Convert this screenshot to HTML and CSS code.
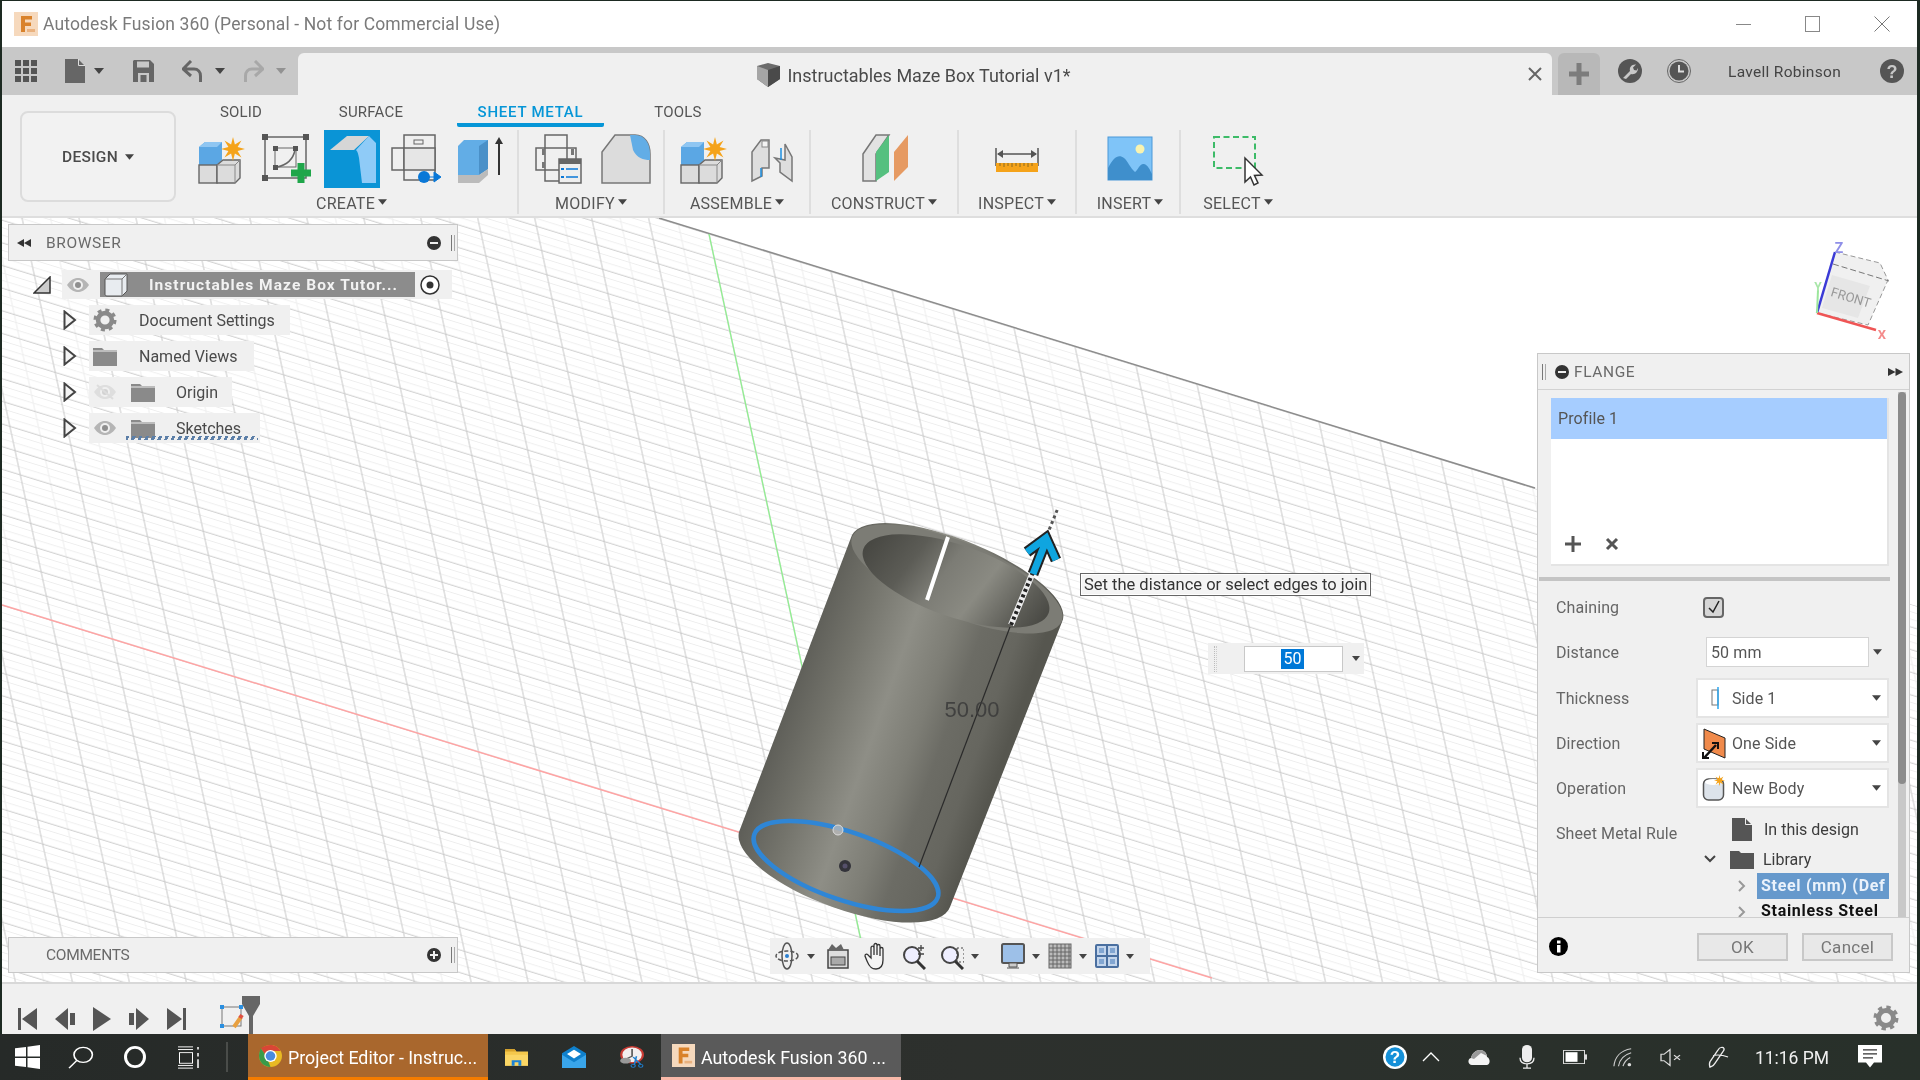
FILE: index.html
```html
<!DOCTYPE html>
<html lang="en">
<head>
<meta charset="utf-8">
<title>Autodesk Fusion 360</title>
<link rel="stylesheet" href="styles.css">
</head>
<body>
<svg class="defs" width="0" height="0" aria-hidden="true">
  <defs>
    <symbol id="star" viewBox="-12 -12 24 24"><polygon fill="#f5a31a" points="12,0 4.6,1.9 8.5,8.5 1.9,4.6 0,12 -1.9,4.6 -8.5,8.5 -4.6,1.9 -12,0 -4.6,-1.9 -8.5,-8.5 -1.9,-4.6 0,-12 1.9,-4.6 8.5,-8.5 4.6,-1.9"/></symbol>
    <symbol id="caret" viewBox="0 0 10 6"><polygon points="0,0 10,0 5,6" fill="#444"/></symbol>
    <symbol id="newcomp" viewBox="0 0 56 58">
      <polygon points="5,17 11,12 28,12 28,30 23,35 5,35" fill="#5ba7e4"/><polygon points="5,17 11,12 28,12 23,17" fill="#8fc6f2"/>
      <rect x="5" y="35" width="18" height="18" fill="#dcdcdc" stroke="#666" stroke-width="1.4"/>
      <polygon points="23,35 29,30 46,30 46,48 41,53 23,53" fill="#dcdcdc" stroke="#666" stroke-width="1.4"/><path d="M23 35H41V53M41 35L46 30" fill="none" stroke="#888" stroke-width="1"/>
      <use href="#star" x="27" y="7" width="24" height="24"/>
    </symbol>
    <symbol id="folder" viewBox="0 0 24 20"><path d="M0 2H9L11 4H24V20H0Z" fill="#8a8a8a"/><path d="M0 5H24" stroke="#eee" stroke-width="1"/></symbol>
    <symbol id="eye" viewBox="0 0 24 16"><path d="M1 8C5 2 9 1 12 1S19 2 23 8C19 14 15 15 12 15S5 14 1 8Z" fill="#b5b5b5"/><circle cx="12" cy="8" r="5" fill="#f0f0f0"/><circle cx="12" cy="8" r="3" fill="#8f8f8f"/></symbol>
    <symbol id="tree-arrow" viewBox="0 0 14 20"><polygon points="1.5,1.5 12,10 1.5,18.5" fill="#f4f4f4" stroke="#444" stroke-width="2"/></symbol>
    <symbol id="gear" viewBox="0 0 26 26"><circle cx="13" cy="13" r="7.5" fill="none" stroke="#8a8a8a" stroke-width="5"/><circle cx="13" cy="13" r="10.5" fill="none" stroke="#8a8a8a" stroke-width="4" stroke-dasharray="4.2 4.05"/></symbol>
    <symbol id="minus-c" viewBox="0 0 14 14"><circle cx="7" cy="7" r="7" fill="#333"/><rect x="3" y="6" width="8" height="2" fill="#eee"/></symbol>
    <symbol id="plus-c" viewBox="0 0 14 14"><circle cx="7" cy="7" r="7" fill="#333"/><path d="M3 7H11M7 3V11" stroke="#eee" stroke-width="2"/></symbol>
  </defs>
</svg>

<div class="window">
  <header class="titlebar">
    <svg class="app-f" viewBox="0 0 24 24"><rect width="24" height="24" fill="#f6d9bd"/><path d="M7 4H18V7.5H11V10.5H17V14H11V20H7Z" fill="#d9822b"/><rect x="13" y="17" width="8" height="3" fill="#eab27f"/></svg>
    <span class="title-text">Autodesk Fusion 360 (Personal - Not for Commercial Use)</span>
    <div class="winctl">
      <svg width="15" height="15" viewBox="0 0 15 15"><path d="M0 7.5H15" stroke="#888"/></svg>
      <svg width="15" height="16" viewBox="0 0 15 16"><rect x=".5" y=".5" width="14" height="15" fill="none" stroke="#888"/></svg>
      <svg width="16" height="16" viewBox="0 0 16 16"><path d="M.5 .5L15.5 15.5M15.5 .5L.5 15.5" stroke="#777"/></svg>
    </div>
  </header>

  <div class="tabbar">
    <div class="qa">
      <svg class="qa-grid" width="22" height="22" viewBox="0 0 22 22" fill="#555"><rect width="6" height="6"/><rect x="8" width="6" height="6"/><rect x="16" width="6" height="6"/><rect y="8" width="6" height="6"/><rect x="8" y="8" width="6" height="6"/><rect x="16" y="8" width="6" height="6"/><rect y="16" width="6" height="6"/><rect x="8" y="16" width="6" height="6"/><rect x="16" y="16" width="6" height="6"/></svg>
      <svg class="qa-doc" width="20" height="24" viewBox="0 0 20 24"><path d="M0 0H13L20 7V24H0Z" fill="#666"/><path d="M13.5 0V6.5H20" fill="none" stroke="#ddd"/></svg>
      <svg class="qa-caret" width="10" height="6"><use href="#caret"/></svg>
      <svg class="qa-save" width="21" height="22" viewBox="0 0 21 22"><path d="M1 0H17L21 4V22H0V1Z" fill="#666"/><rect x="4" y="1.5" width="12" height="6" fill="#c8c8c8"/><rect x="5" y="13" width="11" height="9" fill="#c8c8c8"/><rect x="7.500" y="15" width="6" height="7" fill="#666"/></svg>
      <svg class="qa-undo" width="21" height="22" viewBox="0 0 21 22"><path d="M9 1L1 9L9 16M2 9H12C16 9 18.500 12 18.500 16V22" fill="none" stroke="#666" stroke-width="3"/></svg>
      <svg class="qa-caret" width="10" height="6"><use href="#caret"/></svg>
      <svg class="qa-redo" width="21" height="22" viewBox="0 0 21 22"><path d="M12 1L20 9L12 16M19 9H9C5 9 2.500 12 2.500 16V22" fill="none" stroke="#a8a8a8" stroke-width="3"/></svg>
      <svg class="qa-caret faded" width="10" height="6"><use href="#caret"/></svg>
    </div>
    <div class="doc-tab">
      <div class="doc-name">
        <svg width="25" height="24" viewBox="0 0 25 24"><path d="M2 3L13 0L25 3V16L13 24L2 16Z" fill="#6b6b6b"/><path d="M2 3L13 7V24L2 16Z" fill="#a5a5a5"/><path d="M13 7L25 3V16L13 24Z" fill="#4a4a4a"/></svg>
        <span>Instructables Maze Box Tutorial v1*</span>
      </div>
      <svg class="doc-close" width="14" height="14" viewBox="0 0 14 14"><path d="M1 1L13 13M13 1L1 13" stroke="#666" stroke-width="2"/></svg>
    </div>
    <div class="new-tab"><svg width="20" height="22" viewBox="0 0 20 22"><path d="M10 0V22M0 11H20" stroke="#7c7c7c" stroke-width="5"/></svg></div>
    <svg class="tb-wrench" width="24" height="24" viewBox="0 0 24 24"><circle cx="12" cy="12" r="12" fill="#555"/><path d="M5 19L12 12C11 8 14 5 18 5.500L15 8.500L16 11L18.500 11.500L20 9C20 13 17 16 13 15L8 20Z" fill="#c8c8c8"/></svg>
    <svg class="tb-clock" width="24" height="24" viewBox="0 0 24 24"><circle cx="12" cy="12" r="11.500" fill="none" stroke="#666"/><circle cx="12" cy="12" r="9.500" fill="#555"/><path d="M12 6V12.500H17" fill="none" stroke="#ddd" stroke-width="2"/></svg>
    <span class="user">Lavell Robinson</span>
    <svg class="tb-help" width="24" height="24" viewBox="0 0 24 24"><circle cx="12" cy="12" r="12" fill="#555"/><text x="12" y="18.500" class="help-q">?</text></svg>
  </div>

  <div class="toolbar">
    <div class="design">DESIGN<svg width="9" height="6"><use href="#caret"/></svg></div>
    <div class="ribbon">
      <nav class="rtabs">
        <span class="rtab w-solid">SOLID</span>
        <span class="rtab w-surface">SURFACE</span>
        <span class="rtab w-sheet active">SHEET METAL</span>
        <span class="rtab w-tools">TOOLS</span>
      </nav>
      <div class="groups">
        <section class="group g-create">
          <div class="gicons cells-65">
            <svg viewBox="0 0 56 58"><use href="#newcomp"/></svg>
            <svg viewBox="0 0 56 58"><g fill="none" stroke="#666" stroke-width="1.500"><rect x="6" y="7" width="41" height="41"/><rect x="16" y="18" width="21" height="19" stroke-width="1"/><path d="M36 20C34 30 28 35 18 37"/></g><g fill="#555"><rect x="3" y="4" width="6" height="6"/><rect x="44" y="4" width="6" height="6"/><rect x="3" y="45" width="6" height="6"/><rect x="14" y="16" width="5" height="5"/><rect x="34" y="16" width="5" height="5"/><rect x="14" y="35" width="5" height="5"/></g><path d="M42 33V53M32 43H52" stroke="#1fa64a" stroke-width="7"/></svg>
            <svg viewBox="0 0 56 58"><rect width="56" height="58" fill="#0a94d6"/><polygon points="6,20 23,6 45,6 30,20" fill="#d6d6d6"/><path d="M45 6L32 20C34 22 34 24 35 28L38 53H52V13Z" fill="#8fcbf7"/></svg>
            <svg viewBox="0 0 56 58"><g fill="#efefef" stroke="#666" stroke-width="1.500"><rect x="15" y="5" width="31" height="45"/><rect x="3" y="18" width="12" height="22"/><rect x="15" y="18" width="31" height="22" fill="#e6e6e6"/><rect x="25" y="10" width="9" height="4" stroke-width="1"/></g><circle cx="35" cy="47" r="6" fill="#0a78d7"/><path d="M38 47H46M45 42L52 47L45 52Z" fill="#0a78d7" stroke="#0a78d7"/></svg>
            <svg viewBox="0 0 56 58"><polygon points="4,16 10,10 34,10 34,39 25,45 4,45" fill="#62ade6"/><polygon points="25,16 34,10 34,39 25,45" fill="#4a90c8"/><polygon points="4,45 25,45 34,39 34,45 25,53 4,53" fill="#bbb"/><path d="M45 45V11" stroke="#333" stroke-width="2"/><polygon points="41,14 45,7 49,14" fill="#333"/></svg>
          </div>
          <span class="glabel">CREATE<svg width="9" height="6"><use href="#caret"/></svg></span>
        </section>
        <section class="group g-modify">
          <div class="gicons cells-67">
            <svg viewBox="0 0 56 58"><g fill="none" stroke="#666" stroke-width="1.500"><rect x="15" y="5" width="22" height="46"/><rect x="6" y="18" width="40" height="22"/></g><g fill="#777"><rect x="12" y="19" width="3" height="6"/><rect x="41" y="19" width="3" height="6"/><rect x="12" y="32" width="3" height="6"/></g><rect x="29" y="29" width="22" height="24" fill="#eee" stroke="#666" stroke-width="1.500"/><rect x="29" y="29" width="22" height="5" fill="#666"/><path d="M36 39H48M36 47H48" stroke="#0a78d7" stroke-width="1.500"/><path d="M31 39H34M31 47H34" stroke="#0a78d7" stroke-width="2"/></svg>
            <svg viewBox="0 0 56 58"><path d="M5 53V22L18 5H38C48 5 53 14 53 24V53Z" fill="#dcdcdc" stroke="#777" stroke-width="1.500"/><path d="M33 5H38C48 5 53 14 53 24V30C46 30 40 28 36 20Z" fill="#62ade6"/></svg>
          </div>
          <span class="glabel">MODIFY<svg width="9" height="6"><use href="#caret"/></svg></span>
        </section>
        <section class="group g-assemble">
          <div class="gicons cells-66">
            <svg viewBox="0 0 56 58"><use href="#newcomp"/></svg>
            <svg viewBox="0 0 56 58"><g fill="#dedede" stroke="#777" stroke-width="1.500"><path d="M10 51V22L19 10H27V38L20 38V46Z"/><path d="M33 28L38 33V42L50 51V27L43 14V30Z"/></g><rect x="20" y="11" width="6" height="6" fill="#f4f4f4" stroke="#888"/><path d="M39 18V30M19 38V47" stroke="#1c8fe0" stroke-width="1.500"/></svg>
          </div>
          <span class="glabel">ASSEMBLE<svg width="9" height="6"><use href="#caret"/></svg></span>
        </section>
        <section class="group g-construct">
          <div class="gicons cells-66">
            <svg viewBox="0 0 56 58"><polygon points="7,24 20,5 33,5 20,24 20,51 7,51" fill="#e2e2e2" stroke="#777" stroke-width="1.500"/><polygon points="20,22 33,5 33,42 20,51" fill="#55c07f"/><polygon points="38,22 52,5 52,37 38,51" fill="#e69a62"/></svg>
          </div>
          <span class="glabel">CONSTRUCT<svg width="9" height="6"><use href="#caret"/></svg></span>
        </section>
        <section class="group g-inspect">
          <div class="gicons cells-66">
            <svg viewBox="0 0 56 58"><path d="M7 18V36M49 18V36" stroke="#555" stroke-width="1.500"/><path d="M9 24H47" stroke="#555" stroke-width="1.500"/><path d="M14 20L8 24L14 28ZM42 20L48 24L42 28Z" fill="#555"/><rect x="7" y="33" width="42" height="9" fill="#f5a31a"/><path d="M11 33V36M15 33V37M19 33V36M23 33V37M27 33V36M31 33V37M35 33V36M39 33V37M43 33V36" stroke="#8a6a20"/></svg>
          </div>
          <span class="glabel">INSPECT<svg width="9" height="6"><use href="#caret"/></svg></span>
        </section>
        <section class="group g-insert">
          <div class="gicons cells-66">
            <svg viewBox="0 0 56 58"><rect x="6" y="7" width="44" height="43" fill="#7fc4f8" stroke="#4a98d8"/><path d="M6 38C12 26 17 24 22 28C26 31 28 38 33 42C36 40 38 33 42 34C46 35 48 40 50 44V50H6Z" fill="#3f8fcc"/><circle cx="38" cy="19" r="4.500" fill="#f8f3b0"/></svg>
          </div>
          <span class="glabel">INSERT<svg width="9" height="6"><use href="#caret"/></svg></span>
        </section>
        <section class="group g-select">
          <div class="gicons cells-66">
            <svg viewBox="0 0 56 58"><rect x="4" y="7" width="41" height="31" fill="none" stroke="#3dbb68" stroke-width="2" stroke-dasharray="6 3.500"/><path d="M35 28V52L40.500 47L44 55L48 53L44.500 45.500L52 45Z" fill="#fff" stroke="#333" stroke-width="1.500"/></svg>
          </div>
          <span class="glabel">SELECT<svg width="9" height="6"><use href="#caret"/></svg></span>
        </section>
      </div>
    </div>
  </div>

  <main class="viewport">
    <svg class="scene" viewBox="2 218 1915 764" width="1915" height="764">
      <defs>
        <pattern id="grid" width="61" height="24.250" patternUnits="userSpaceOnUse" patternTransform="matrix(1 .308 .215 1 692.880 225.260)">
          <path d="M45.750 0V24.250" stroke="#ebebeb" stroke-width="1" fill="none"/>
          <path d="M0 12.120H61M0 20.200H61" stroke="#ededed" stroke-width="1" fill="none"/>
          <path d="M15.250 0V24.250" stroke="#c6c6c6" stroke-width="1" fill="none"/>
          <path d="M0 4.040H61" stroke="#c6c6c6" stroke-width="1" fill="none"/>
        </pattern>
        <clipPath id="plane"><polygon points="2,218 659,218 1917,606 1917,982 2,982"/></clipPath>
        <linearGradient id="body" gradientUnits="userSpaceOnUse" x1="739" y1="832" x2="950" y2="907">
          <stop offset="0" stop-color="#5e5e58"/><stop offset=".2" stop-color="#74746c"/><stop offset=".42" stop-color="#8e8e86"/><stop offset=".6" stop-color="#7d7d75"/><stop offset=".72" stop-color="#6c6c65"/><stop offset=".88" stop-color="#66665f"/><stop offset="1" stop-color="#56564f"/>
        </linearGradient>
        <linearGradient id="hole" gradientUnits="userSpaceOnUse" x1="865" y1="550" x2="1050" y2="612">
          <stop offset="0" stop-color="#464641"/><stop offset=".25" stop-color="#5c5c56"/><stop offset=".42" stop-color="#7c7c75"/><stop offset=".62" stop-color="#8a8a82"/><stop offset=".85" stop-color="#5c5c56"/><stop offset="1" stop-color="#454540"/>
        </linearGradient>
      </defs>
      <rect x="2" y="218" width="1915" height="764" fill="#fff"/>
      <rect x="2" y="218" width="1915" height="764" fill="url(#grid)" clip-path="url(#plane)"/>
      <path d="M659 218L1535 488" stroke="#8c8c8c" stroke-width="1.500"/>
      <path d="M709 234L862 945" stroke="#8ef08e" stroke-width="1.200"/>
      <path d="M2 605L1212 978" stroke="#ffa4a4" stroke-width="1.500"/>

      <path d="M852 535L739 832A112 40 20 0 0 950 907L1062 622A113 38 22 0 0 852 535Z" fill="url(#body)"/>
      <ellipse cx="957" cy="579" rx="113" ry="37" transform="rotate(22 957 579)" fill="#7c7c75"/>
      <ellipse cx="956" cy="581" rx="98" ry="36" transform="rotate(19 956 581)" fill="url(#hole)"/>
      <path d="M948 537L927 600" stroke="#fff" stroke-width="4"/>
      <ellipse cx="846" cy="866" rx="97" ry="34" transform="rotate(19 846 866)" fill="none" stroke="#2f86d6" stroke-width="4.500"/>
      <path d="M1010 627L919 867" stroke="#2a2a2a" stroke-width="1.200"/>
      <circle cx="838" cy="830" r="5" fill="#b8b8b8" fill-opacity=".8" stroke="#ddd"/>
      <circle cx="845" cy="866" r="6" fill="#33333a"/><circle cx="845" cy="866" r="2.500" fill="#55506a"/>
      <path d="M1011 625L1033 572" stroke="#eee" stroke-width="6"/>
      <path d="M1011 625L1033 572" stroke="#222" stroke-width="4" stroke-dasharray="3 3"/>
      <path d="M1047 535L1058 508" stroke="#555" stroke-width="3" stroke-dasharray="3 3"/>
      <path d="M1033 574L1046 541M1027 552L1046 538L1056 560" fill="none" stroke="#222" stroke-width="11"/>
      <path d="M1033 574L1046 541M1027 552L1046 538L1056 560" fill="none" stroke="#0fa5e0" stroke-width="7"/>
      <text x="972" y="717" class="dim-text">50.00</text>

      <g class="viewcube">
        <polygon points="1835,252 1880,263 1888,280 1868,325 1817,313" fill="#f0f0f0" stroke="#999" stroke-dasharray="5 3"/>
        <path d="M1833 264L1889 281" fill="none" stroke="#777" stroke-dasharray="6 3"/>
        <polygon points="1832,275 1870,286 1858,318 1822,308" fill="#e6e6e6"/>
        <text x="1851" y="302" class="cube-text" transform="rotate(17 1851 297)">FRONT</text>
        <path d="M1835 252L1817 313" stroke="#3b3bd6" stroke-width="2.500"/>
        <path d="M1817 313L1876 330" stroke="#ef5555" stroke-width="2.500"/>
        <path d="M1817 313L1818 290" stroke="#9be69b" stroke-width="2"/>
        <text x="1839" y="253" class="axis-z">Z</text>
        <text x="1882" y="339" class="axis-x">X</text>
        <text x="1818" y="291" class="axis-y">Y</text>
      </g>
    </svg>

    <aside class="browser">
      <div class="phead">
        <svg class="dbl" width="14" height="8" viewBox="0 0 14 8"><path d="M7 0V8L0 4ZM14 0V8L7 4Z" fill="#333"/></svg>
        <span class="ptitle">BROWSER</span>
        <svg class="pbtn" width="14" height="14"><use href="#minus-c"/></svg>
        <span class="grip"></span>
      </div>
      <div class="tree">
        <div class="root-row">
          <svg class="corner" width="18" height="18" viewBox="0 0 18 18"><polygon points="1,17 17,1 17,17" fill="#ccc" stroke="#333" stroke-width="1.500"/></svg>
          <div class="root-body">
            <svg class="eye-root" width="24" height="16"><use href="#eye"/></svg>
            <div class="root-sel">
              <svg width="24" height="24" viewBox="0 0 24 24"><path d="M1 6L6 1H23V18L18 23H3C1.500 23 1 22 1 21Z" fill="#e8ecf0" stroke="#555"/><path d="M1 6H18V23M18 6L23 1" fill="none" stroke="#777"/></svg>
              <span>Instructables Maze Box Tutor...</span>
            </div>
            <svg class="target" width="20" height="20" viewBox="0 0 20 20"><circle cx="10" cy="10" r="9" fill="#fff" stroke="#333" stroke-width="1.500"/><circle cx="10" cy="10" r="3.500" fill="#333"/></svg>
          </div>
        </div>
        <div class="node"><svg class="tarrow" width="14" height="20"><use href="#tree-arrow"/></svg><div class="nbody n-doc"><svg width="24" height="24"><use href="#gear"/></svg><span>Document Settings</span></div></div>
        <div class="node"><svg class="tarrow" width="14" height="20"><use href="#tree-arrow"/></svg><div class="nbody n-views"><svg width="24" height="20"><use href="#folder"/></svg><span>Named Views</span></div></div>
        <div class="node"><svg class="tarrow" width="14" height="20"><use href="#tree-arrow"/></svg><div class="nbody n-origin"><svg class="hid" width="24" height="16" viewBox="0 0 24 16"><use href="#eye" opacity=".3"/><path d="M4 1L20 15" stroke="#ddd" stroke-width="2"/></svg><svg width="24" height="20"><use href="#folder"/></svg><span>Origin</span></div></div>
        <div class="node"><svg class="tarrow" width="14" height="20"><use href="#tree-arrow"/></svg><div class="nbody n-sk"><svg width="24" height="16"><use href="#eye"/></svg><svg width="24" height="20"><use href="#folder"/></svg><span>Sketches</span><i class="squiggle"></i></div></div>
      </div>
    </aside>

    <aside class="comments">
      <span class="ptitle">COMMENTS</span>
      <svg class="pbtn" width="14" height="14"><use href="#plus-c"/></svg>
      <span class="grip"></span>
    </aside>

    <div class="navbar">
      <svg class="nv-orbit" width="26" height="30" viewBox="0 0 26 30"><ellipse cx="13" cy="15" rx="11" ry="5" fill="none" stroke="#555" stroke-width="1.500" stroke-dasharray="4 2"/><ellipse cx="13" cy="15" rx="5" ry="13" fill="none" stroke="#555" stroke-width="1.500"/><circle cx="13" cy="15" r="2" fill="#2a7fd0"/></svg>
      <svg class="nv-c" width="8" height="5"><use href="#caret"/></svg>
      <svg class="nv-i" width="24" height="28" viewBox="0 0 24 28"><rect x="2" y="8" width="20" height="18" fill="#ddd" stroke="#444" stroke-width="1.500"/><rect x="5" y="15" width="14" height="8" fill="#aaa" stroke="#444"/><path d="M2 8L6 2L10 6L15 2L18 8" fill="#666"/></svg>
      <svg class="nv-i" width="24" height="28" viewBox="0 0 24 28"><path d="M7 16V6C7 3.500 10 3.500 10 6V13V3C10 1 13 1 13 3V13V4C13 2 16 2 16 4V14V7C16 5 19 5 19 7V18C19 24 16 27 12 27C7 27 5 24 3 19L1 14C1 12 3 11 5 14Z" fill="#f4f4f4" stroke="#333" stroke-width="1.300"/></svg>
      <svg class="nv-i" width="24" height="28" viewBox="0 0 24 28"><circle cx="10" cy="13" r="8" fill="#eef" stroke="#444" stroke-width="2"/><path d="M15 19L23 27" stroke="#333" stroke-width="3"/><path d="M19 3V9M16 6H22M16 12H22" stroke="#444" stroke-width="1.300"/></svg>
      <svg class="nv-i" width="24" height="28" viewBox="0 0 24 28"><circle cx="10" cy="13" r="8" fill="#eef" stroke="#444" stroke-width="2"/><path d="M15 19L23 27" stroke="#333" stroke-width="3"/><rect x="17" y="6" width="7" height="14" fill="none" stroke="#444" stroke-dasharray="2 2"/></svg>
      <svg class="nv-c" width="8" height="5"><use href="#caret"/></svg>
      <svg class="nv-i disp" width="24" height="28" viewBox="0 0 24 28"><rect x="1" y="2" width="22" height="19" rx="1.500" fill="#9dc0e8" stroke="#555" stroke-width="2"/><path d="M8 21H16V25H8ZM6 26H18" fill="#ccc" stroke="#555"/></svg>
      <svg class="nv-c" width="8" height="5"><use href="#caret"/></svg>
      <svg class="nv-i wide" width="24" height="26" viewBox="0 0 24 26"><rect x="1" y="1" width="22" height="24" fill="#bbb" stroke="#666"/><path d="M5 1V25M9 1V25M13 1V25M17 1V25M21 1V25M1 5H23M1 9H23M1 13H23M1 17H23M1 21H23" stroke="#666"/></svg>
      <svg class="nv-c" width="8" height="5"><use href="#caret"/></svg>
      <svg class="nv-i wide" width="24" height="24" viewBox="0 0 24 24"><rect x="1" y="1" width="22" height="22" rx="1" fill="#c3d5ec" stroke="#4a6fa0" stroke-width="2"/><path d="M12 1V23M1 12H23" stroke="#4a6fa0" stroke-width="2"/><rect x="4" y="4" width="5" height="5" fill="#82a6d2"/><rect x="15" y="4" width="5" height="5" fill="#82a6d2"/><rect x="4" y="15" width="5" height="5" fill="#82a6d2"/><rect x="15" y="15" width="5" height="5" fill="#82a6d2"/></svg>
      <svg class="nv-c" width="8" height="5"><use href="#caret"/></svg>
    </div>

    <div class="tooltip">Set the distance or select edges to join</div>

    <div class="dist-input">
      <i class="dots"></i>
      <div class="dist-box"><span class="sel">50</span></div>
      <svg width="8" height="5"><use href="#caret"/></svg>
    </div>

    <aside class="flange">
      <div class="fl-head">
        <span class="grip"></span>
        <svg width="14" height="14"><use href="#minus-c"/></svg>
        <span class="ptitle">FLANGE</span>
        <svg class="fl-ff" width="15" height="8" viewBox="0 0 15 8"><path d="M0 0L7.500 4L0 8ZM7.500 0L15 4L7.500 8Z" fill="#333"/></svg>
      </div>
      <div class="fl-body">
        <i class="scroll-track"></i><i class="scroll-thumb"></i>
        <div class="list">
          <div class="list-sel">Profile 1</div>
          <div class="list-tools">
            <svg width="16" height="16" viewBox="0 0 16 16"><path d="M8 0V16M0 8H16" stroke="#555" stroke-width="3"/></svg>
            <svg width="14" height="14" viewBox="0 0 14 14"><path d="M2 2L12 12M12 2L2 12" stroke="#555" stroke-width="3"/></svg>
          </div>
        </div>
        <div class="fl-div"></div>
        <div class="row r-chain"><label>Chaining</label><span class="check"><svg width="14" height="14" viewBox="0 0 14 14"><path d="M2 8L6 12L12 1" fill="none" stroke="#222" stroke-width="1.500"/></svg></span></div>
        <div class="row r-dist"><label>Distance</label><span class="txt">50 mm</span><svg class="rc" width="9" height="6"><use href="#caret"/></svg></div>
        <div class="row r-sel first"><label>Thickness</label><div class="select"><svg width="16" height="24" viewBox="0 0 16 24"><rect x="4" y="4" width="6" height="15" fill="#fff" stroke="#777"/><path d="M10 1V23" stroke="#2aa5ee" stroke-width="1.500"/></svg><span>Side 1</span><svg class="sc" width="9" height="6"><use href="#caret"/></svg></div></div>
        <div class="row r-sel"><label>Direction</label><div class="select sel-wide"><svg width="24" height="32" viewBox="0 0 24 32"><polygon points="2,2 23,11 23,31 2,22" fill="#f08a4b" stroke="#222"/><path d="M2 31L14 18" stroke="#111" stroke-width="2.500"/><path d="M1 25V31H7M10 16H16V22" fill="none" stroke="#111" stroke-width="2"/></svg><span>One Side</span><svg class="sc" width="9" height="6"><use href="#caret"/></svg></div></div>
        <div class="row r-sel"><label>Operation</label><div class="select sel-wide"><svg width="24" height="26" viewBox="0 0 24 26"><rect x="1.500" y="4" width="20" height="21" rx="5" fill="#dde3ea" stroke="#555" stroke-width="1.500"/><ellipse cx="11" cy="7" rx="8" ry="3" fill="#fff"/><use href="#star" x="12" y="0" width="11" height="11"/></svg><span>New Body</span><svg class="sc" width="9" height="6"><use href="#caret"/></svg></div></div>
        <div class="row r-rule">
          <label>Sheet Metal Rule</label>
          <div class="rules">
            <div class="rule r-file"><svg width="20" height="23" viewBox="0 0 20 23"><path d="M0 0H13L20 7V23H0Z" fill="#555"/><path d="M13.500 0V6.500H20" fill="none" stroke="#eee"/></svg><span>In this design</span></div>
            <div class="rule r-lib"><svg class="chev" width="12" height="8" viewBox="0 0 12 8"><path d="M1 1L6 6L11 1" fill="none" stroke="#444" stroke-width="2"/></svg><svg width="24" height="20" viewBox="0 0 24 20"><path d="M0 2H9L11 4H24V20H0Z" fill="#555"/></svg><span>Library</span></div>
            <div class="rule r-item"><svg width="8" height="12" viewBox="0 0 8 12"><path d="M1 1L6 6L1 11" fill="none" stroke="#999" stroke-width="2"/></svg><div class="rule-sel">Steel (mm) (Def</div></div>
            <div class="rule r-item"><svg width="8" height="12" viewBox="0 0 8 12"><path d="M1 1L6 6L1 11" fill="none" stroke="#999" stroke-width="2"/></svg><div class="rule-plain">Stainless Steel</div></div>
          </div>
        </div>
      </div>
      <div class="fl-foot">
        <svg class="info" width="19" height="19" viewBox="0 0 19 19"><circle cx="9.500" cy="9.500" r="9.500" fill="#000"/><rect x="8" y="8" width="3.500" height="7.500" fill="#fff"/><rect x="8" y="3.500" width="3.500" height="3" fill="#fff"/></svg>
        <button class="btn" type="button">OK</button>
        <button class="btn" type="button">Cancel</button>
      </div>
    </aside>
  </main>

  <div class="timeline">
    <div class="tl-ctrl">
      <svg width="19" height="22" viewBox="0 0 19 22"><path d="M0 0H3V22H0ZM19 0V22L4 11Z" fill="#555"/></svg>
      <svg width="20" height="22" viewBox="0 0 20 22"><path d="M13 0V22L0 11ZM15 5H20V17H15Z" fill="#555"/></svg>
      <svg width="18" height="24" viewBox="0 0 18 24"><path d="M0 0L18 12L0 24Z" fill="#555"/></svg>
      <svg width="20" height="22" viewBox="0 0 20 22"><path d="M7 0V22L20 11ZM0 5H5V17H0Z" fill="#555"/></svg>
      <svg width="19" height="22" viewBox="0 0 19 22"><path d="M16 0H19V22H16ZM0 0V22L15 11Z" fill="#555"/></svg>
    </div>
    <div class="tl-track">
      <svg class="tl-sketch" width="24" height="24" viewBox="0 0 24 24"><rect x="2" y="2" width="19" height="19" fill="none" stroke="#777"/><rect width="4" height="4" fill="#2a8fe0"/><rect x="19" width="4" height="4" fill="#2a8fe0"/><rect y="19" width="4" height="4" fill="#2a8fe0"/><path d="M14 22L21 12" stroke="#e8a040" stroke-width="4"/><path d="M20 13L22 10" stroke="#e05040" stroke-width="4"/></svg>
      <svg class="tl-mark" width="20" height="38" viewBox="0 0 20 38"><path d="M1 0H19V8L12 20V38H8V20L1 8Z" fill="#666"/></svg>
    </div>
    <svg class="tl-gear" width="26" height="26"><use href="#gear"/></svg>
  </div>
</div>

<footer class="taskbar">
  <div class="tk-cell"><svg width="25" height="24" viewBox="0 0 25 25" preserveAspectRatio="none" fill="#fff"><polygon points="0,3.500 11,2 11,12 0,12"/><polygon points="12.500,1.800 25,0 25,12 12.500,12"/><polygon points="0,13.500 11,13.500 11,23 0,21.500"/><polygon points="12.500,13.500 25,13.500 25,25 12.500,23.200"/></svg></div>
  <div class="tk-cell"><svg width="26" height="23" viewBox="0 0 24 26" preserveAspectRatio="none"><circle cx="14" cy="10" r="8.500" fill="none" stroke="#fff" stroke-width="1.500"/><path d="M8 16.500L1 25" stroke="#fff" stroke-width="1.500"/></svg></div>
  <div class="tk-cell"><svg width="24" height="24" viewBox="0 0 24 26" preserveAspectRatio="none"><ellipse cx="12" cy="13" rx="9.500" ry="10.500" fill="none" stroke="#fff" stroke-width="3"/></svg></div>
  <div class="tk-cell"><svg width="24" height="23" viewBox="0 0 24 26" preserveAspectRatio="none"><path d="M1 1H16M1 4H16M1 22H16M1 25H16" stroke="#fff"/><rect x="2.500" y="7.500" width="13" height="12" fill="none" stroke="#fff"/><path d="M21 1V4M21 8V12M21 15V25" stroke="#fff" stroke-width="1.500"/></svg></div>
  <i class="tk-sep"></i>
  <div class="tk-app chrome">
    <svg width="23" height="22" viewBox="0 0 24 26" preserveAspectRatio="none"><ellipse cx="12" cy="13" rx="12" ry="13" fill="#e8b923"/><path d="M12 0C16.500 0 20.500 2.500 22.500 7H12C9.500 7 7 8.500 6 11L2 4C4.500 1.500 8 0 12 0Z" fill="#d94636"/><path d="M2 4L7.500 13L12 26C5 26 0 20 0 13C0 9.500 .8 6.500 2 4Z" fill="#3a9b4a"/><ellipse cx="12" cy="13" rx="6.500" ry="7" fill="#fff"/><ellipse cx="12" cy="13" rx="5" ry="5.500" fill="#4a8be0"/></svg>
    <span>Project Editor - Instruc...</span>
  </div>
  <div class="tk-pin"><svg width="23" height="19" viewBox="0 0 24 28" preserveAspectRatio="none"><path d="M0 2H10L12 5H24V26H0Z" fill="#f5c84c"/><path d="M0 2H10L12 5H0Z" fill="#d9a32a"/><rect x="0" y="10" width="24" height="16" fill="#fbd665"/><path d="M7 26V18H17V26H14V21H10V26Z" fill="#1c83d6"/></svg></div>
  <div class="tk-pin"><svg width="24" height="22" viewBox="0 0 24 30" preserveAspectRatio="none"><path d="M12 0L24 10V30H0V10Z" fill="#0f80cc"/><path d="M0 12L12 22L24 12V30H0Z" fill="#39a5ea"/><path d="M5 11L12 5L19 11L12 17Z" fill="#fff"/></svg></div>
  <div class="tk-pin"><svg width="26" height="22" viewBox="0 0 24 30" preserveAspectRatio="none"><ellipse cx="13" cy="12" rx="10" ry="11" fill="#f3eeee" stroke="#c93a33" stroke-width="2"/><path d="M13 4L13 14L7 18" fill="none" stroke="#555" stroke-width="1.500"/><ellipse cx="7" cy="20" rx="5" ry="4" fill="#999"/><path d="M14 15L21 25M17 14L15 26" stroke="#1d7fd0" stroke-width="1.500"/><circle cx="21" cy="27" r="2" fill="none" stroke="#1d7fd0"/><circle cx="14" cy="27" r="2" fill="none" stroke="#1d7fd0"/></svg></div>
  <div class="tk-app fusion">
    <svg width="23" height="23" viewBox="0 0 24 26" preserveAspectRatio="none"><rect width="24" height="26" fill="#f6d9bd"/><path d="M7 4H18V8H11V11H17V15H11V22H7Z" fill="#d9822b"/><rect x="13" y="19" width="8" height="3" fill="#eab27f"/></svg>
    <span>Autodesk Fusion 360 ...</span>
  </div>
  <div class="tray">
    <div class="tr-help"><svg width="24" height="24" viewBox="0 0 24 26" preserveAspectRatio="none"><ellipse cx="12" cy="13" rx="12" ry="13" fill="#fff"/><ellipse cx="12" cy="13" rx="9.500" ry="10.500" fill="#1590d8"/><text x="12" y="19" class="tr-q">?</text></svg></div>
    <div class="tr-up"><svg width="18" height="10" viewBox="0 0 18 10"><path d="M1 9L9 1L17 9" fill="none" stroke="#fff" stroke-width="1.300"/></svg></div>
    <div class="tr"><svg width="24" height="16" viewBox="0 0 24 16"><path d="M5 16C1 16 0 10 4 9C5 4 9 1 13 1C17 1 20 4 20 8C23 9 24 15 20 16Z" fill="#f4f4f4"/><path d="M4 9C5 4 9 1 13 1C17 1 19 4 20 7L14 4L7 10Z" fill="#9a9a9a"/></svg></div>
    <div class="tr"><svg width="16" height="24" viewBox="0 0 16 28" preserveAspectRatio="none"><rect x="3" y="0" width="10" height="20" rx="5" fill="#eee"/><path d="M1 15C1 20 4 22 8 22S15 20 15 15M8 22V27M4 27H12" fill="none" stroke="#eee" stroke-width="1.300"/></svg></div>
    <div class="tr"><svg width="24" height="14" viewBox="0 0 24 16" preserveAspectRatio="none"><rect x=".5" y=".5" width="21" height="15" fill="none" stroke="#ddd"/><rect x="2.500" y="2.500" width="12" height="11" fill="#fff"/><rect x="22" y="5" width="2" height="6" fill="#ddd"/></svg></div>
    <div class="tr"><svg width="20" height="19" viewBox="0 0 22 24" preserveAspectRatio="none"><g fill="none" stroke="#ccc" stroke-width="1.300"><path d="M1 23C2 12 8 3 20 1"/><path d="M6 23C7 16 11 9 20 6"/><path d="M11 23C12 19 14 15 19 12"/></g><circle cx="18" cy="21" r="2" fill="#ddd"/></svg></div>
    <div class="tr"><svg width="22" height="19" viewBox="0 0 22 24" preserveAspectRatio="none"><path d="M1 8H4L10 2V22L4 16H1Z" fill="none" stroke="#ddd" stroke-width="1.300"/><path d="M14 9L20 15M20 9L14 15" stroke="#ddd" stroke-width="1.300"/></svg></div>
    <div class="tr"><svg width="22" height="22" viewBox="0 0 22 28" preserveAspectRatio="none"><path d="M13 2C16 1 17 4 15 7L7 22C6 25 2 27 2 27S1 23 2 20L10 5C11 3 12 2 13 2ZM5 12C10 11 16 12 20 14" fill="none" stroke="#eee" stroke-width="1.400"/></svg></div>
    <div class="tr-time">11:16 PM</div>
    <div class="tr-note"><svg width="24" height="24" viewBox="0 0 24 30" preserveAspectRatio="none"><path d="M0 0H24V22H16L12 28L8 22H0Z" fill="#fff"/><path d="M5 6H19M5 11H19M5 16H15" stroke="#333" stroke-width="1.500"/></svg></div>
  </div>
</footer>
</body>
</html>
```

FILE: styles.css
```css
* { box-sizing: border-box; }
html, body { margin: 0; height: 100%; }
body {
  width: 1920px; height: 1080px; overflow: hidden;
  background: #1d2a22;
  font-family: Roboto, "Liberation Sans", sans-serif;
  color: #555;
  display: flex; flex-direction: column;
}
svg { display: block; flex: none; }
i { display: block; }
.defs { position: absolute; }

.window { margin: 1px 3px 0 2px; height: 1033px; display: flex; flex-direction: column; background: #f0f0f0; filter: blur(.4px); }

/* title bar */
.titlebar { height: 46px; background: #fff; display: flex; align-items: center; padding-left: 12px; flex: none; }
.app-f { width: 24px; height: 24px; }
.title-text { margin-left: 5px; font-size: 17.500px; color: #7a7a7a; letter-spacing: .14px; }
.winctl { margin-left: auto; margin-right: 27px; display: flex; align-items: center; gap: 54px; }

/* document tabs */
.tabbar { height: 48px; flex: none; background: #c8c8c8; display: flex; align-items: flex-end; position: relative; }
.qa { width: 296px; height: 48px; display: flex; align-items: center; padding-left: 13px; }
.qa-doc { margin-left: 28px; }
.qa-caret { margin-left: 9px; }
.qa-caret.faded { opacity: .4; }
.qa-save { margin-left: 29px; }
.qa-undo { margin-left: 28px; }
.qa-redo { margin-left: 18px; }
.qa-undo + .qa-caret, .qa-redo + .qa-caret { margin-left: 12px; }
.doc-tab { width: 1254px; height: 42px; background: #f0f0f0; border-radius: 6px 6px 0 0; position: relative; display: flex; align-items: center; justify-content: center; }
.doc-name { display: flex; align-items: center; gap: 7px; font-size: 18px; color: #4a4a4a; transform: translate(-12px, 1px); }
.doc-close { position: absolute; right: 10px; top: 14px; }
.new-tab { margin-left: 6px; width: 42px; height: 42px; background: #b8b8b8; border-radius: 6px 6px 0 0; display: flex; align-items: center; justify-content: center; }
.tb-wrench { margin: 0 0 12px 18px; }
.tb-clock { margin: 0 0 12px 25px; }
.user { margin: 0 0 14px 37px; width: 123px; font-size: 15.500px; color: #444; letter-spacing: .3px; white-space: nowrap; }
.tb-help { margin: 0 0 12px 29px; }
.help-q { font: 700 18px "Liberation Sans", sans-serif; fill: #c8c8c8; text-anchor: middle; }

/* ribbon */
.toolbar { height: 123px; flex: none; background: #f0f0f0; border-bottom: 2px solid #dedede; display: flex; }
.design { width: 156px; height: 91px; margin: 16px 14px 0 18px; border: 2px solid #dcdcdc; border-radius: 8px; background: #f2f2f2; display: flex; align-items: center; justify-content: center; gap: 7px; font-size: 15.500px; font-weight: 500; color: #4a4a4a; letter-spacing: .3px; }
.ribbon { display: flex; flex-direction: column; }
.rtabs { height: 35px; display: flex; }
.rtab { height: 32px; font-size: 15px; letter-spacing: .2px; display: flex; align-items: center; justify-content: center; color: #555; padding-top: 2px; }
.w-solid { width: 102px; }
.w-surface { width: 158px; }
.w-sheet { width: 147px; margin-left: 7px; }
.w-tools { width: 148px; }
.rtab.active { color: #0696d7; border-bottom: 4px solid #0696d7; border-radius: 0 0 2px 2px; font-weight: 500; letter-spacing: .75px; padding-top: 6px; }
.groups { display: flex; height: 86px; }
.group { border-right: 2px solid #dedede; display: flex; flex-direction: column; align-items: center; height: 84px; }
.g-create { width: 329px; padding-right: 4px; }
.g-modify { width: 146px; }
.g-assemble { width: 146px; }
.g-construct { width: 148px; }
.g-inspect { width: 118px; }
.g-insert { width: 104px; padding-left: 4px; }
.g-select { width: 114px; border-right: 0; }
.gicons { display: flex; justify-content: center; height: 58px; }
.gicons svg { width: 56px; height: 58px; }
.cells-65 { gap: 9px; }
.cells-67 { gap: 11px; }
.cells-66 { gap: 10px; }
.glabel { margin-top: 6px; height: 18px; display: flex; align-items: center; gap: 3px; font-size: 16px; letter-spacing: .25px; color: #555; }
.glabel svg { margin-top: -2px; }

/* viewport */
.viewport { position: relative; height: 764px; flex: none; background: #fff; overflow: hidden; }
.scene { position: absolute; left: 0; top: 0; }
.dim-text { font: 22px "Liberation Sans", sans-serif; fill: #3a3a3a; fill-opacity: .85; text-anchor: middle; }
.cube-text { font: 13px Roboto, sans-serif; fill: #999; text-anchor: middle; }
.axis-z { font: 700 14px Roboto, sans-serif; fill: #8f8fe8; text-anchor: middle; }
.axis-x { font: 700 13px Roboto, sans-serif; fill: #f48a8a; text-anchor: middle; }
.axis-y { font: 700 12px Roboto, sans-serif; fill: #a8e6a8; text-anchor: middle; }

/* floating panels */
.ptitle { font-size: 15.500px; color: #6a6a6a; letter-spacing: .6px; }
.phead, .comments { height: 37px; background: #f0f0f0; border: 1px solid #c8c8c8; display: flex; align-items: center; }
.grip { width: 4px; height: 16px; border-left: 1px solid #777; border-right: 1px solid #aaa; }
.browser { position: absolute; left: 6px; top: 6px; width: 450px; }
.dbl { margin-left: 8px; }
.phead .ptitle { margin-left: 15px; }
.pbtn { margin-left: auto; margin-right: 10px; }
.phead .grip, .comments .grip { margin-right: 2px; }
.tree { display: flex; flex-direction: column; gap: 6px; margin-top: 9px; font-size: 16px; color: #4a4a4a; }
.root-row { height: 29px; display: flex; align-items: center; }
.corner { margin-left: 25px; }
.root-body { margin-left: 11px; width: 390px; height: 29px; background: #f0f0f0; display: flex; align-items: center; }
.eye-root { margin-left: 4px; }
.root-sel { margin-left: 10px; width: 315px; height: 25px; background: #8c8c8c; display: flex; align-items: center; color: #f2f2f2; font-weight: 700; letter-spacing: 1.05px; padding-left: 4px; font-size: 15.500px; }
.root-sel span { margin-left: 21px; white-space: nowrap; }
.target { margin-left: 5px; }
.node { height: 30px; display: flex; align-items: center; }
.tarrow { margin-left: 55px; }
.nbody { margin-left: 12px; height: 30px; background: #f0f0f0; display: flex; align-items: center; padding-left: 4px; position: relative; }
.nbody span { white-space: nowrap; }
.n-doc { width: 201px; }
.n-views { width: 165px; }
.n-origin { width: 143px; }
.n-sk { width: 171px; }
.n-doc span, .n-views span { margin-left: 22px; }
.n-origin svg + svg, .n-sk svg + svg { margin-left: 14px; }
.n-origin span, .n-sk span { margin-left: 21px; }
.squiggle { position: absolute; left: 37px; top: 23px; width: 132px; height: 4px; background: repeating-linear-gradient(115deg, #5c7fa8 0 3px, transparent 3px 6px); }
.comments { position: absolute; left: 6px; top: 719px; width: 450px; height: 36px; }
.comments .ptitle { margin-left: 37px; letter-spacing: -.3px; }

.navbar { position: absolute; left: 768px; top: 720px; width: 380px; height: 36px; background: #f0f0f0; display: flex; align-items: center; padding-left: 4px; }
.nv-c { margin-left: 7px; }
.nv-i { margin-left: 8px; }
.nv-c + .nv-i { margin-left: 11px; }
.nv-i + .nv-i { margin-left: 14px; }
.nv-i.disp { margin-left: 22px; }
.nv-i.wide { margin-left: 8px; }
.tooltip { position: absolute; left: 1078px; top: 355px; height: 23px; padding: 0 3px; background: #f4f4f4; border: 1px solid #666; box-shadow: inset 0 0 0 1px #fff; font-size: 16.500px; line-height: 21px; color: #333; white-space: nowrap; }

.dist-input { position: absolute; left: 1206px; top: 425px; width: 156px; height: 31px; background: #f0f0f0; display: flex; align-items: center; }
.dots { margin-left: 6px; width: 3px; height: 26px; border-left: 1px dotted #bbb; border-right: 1px dotted #ccc; }
.dist-box { margin-left: 27px; width: 99px; height: 26px; background: #fff; border: 1px solid #c8c8c8; display: flex; align-items: center; justify-content: center; font-size: 16px; }
.sel { background: #0078d7; color: #fff; padding: 0 3px; line-height: 20px; transform: translateX(-1px); }
.dist-input svg { margin-left: 9px; }

.flange { position: absolute; left: 1535px; top: 135px; width: 373px; height: 620px; background: #f0f0f0; border: 1px solid #c8c8c8; display: flex; flex-direction: column; }
.fl-head { height: 36px; flex: none; display: flex; align-items: center; border-bottom: 1px solid #d2d2d2; padding-left: 4px; }
.fl-head svg:nth-child(2) { margin-left: 9px; }
.fl-head .ptitle { margin-left: 5px; }
.fl-ff { margin-left: auto; margin-right: 6px; }
.fl-body { position: relative; flex: 1; overflow: hidden; padding: 8px 0 0 13px; font-size: 16px; color: #666; letter-spacing: .1px; }
.scroll-track { position: absolute; left: 360px; top: 2px; width: 8px; bottom: 0; background: #c8c8c8; }
.scroll-thumb { position: absolute; left: 360px; top: 2px; width: 8px; height: 392px; background: #8b8b8b; border-radius: 4px; }
.list { width: 338px; height: 168px; background: #fff; border: 2px solid #e4e4e4; border-width: 0 2px 2px 0; display: flex; flex-direction: column; }
.list-sel { height: 41px; background: #a6cdff; display: flex; align-items: center; padding-left: 7px; color: #555; }
.list-tools { margin-top: auto; height: 38px; display: flex; align-items: center; gap: 24px; padding-left: 14px; padding-bottom: 3px; }
.fl-div { margin: 11px 0 0 -12px; width: 351px; height: 4px; background: #c4c4c4; }
.row { display: flex; align-items: center; }
.row label { width: 140px; margin-left: 5px; flex: none; }
.r-chain { height: 20px; margin-top: 16px; }
.check { margin-left: 7px; width: 21px; height: 21px; background: #d6d6d6; border: 2px solid #666; border-radius: 4px; display: flex; align-items: center; justify-content: center; }
.r-dist { height: 30px; margin-top: 20px; }
.txt { margin-left: 10px; width: 163px; height: 30px; background: #fff; border: 1px solid #d4d4d4; padding-left: 4px; display: flex; align-items: center; color: #555; }
.rc { margin-left: 4px; }
.r-sel { height: 40px; margin-top: 5px; }
.r-sel.first { margin-top: 11px; }
.select { width: 193px; height: 40px; background: #fff; border: 2px solid #e4e4e4; display: flex; align-items: center; padding-left: 10px; position: relative; color: #555; }
.select span { margin-left: 8px; }
.sel-wide { padding-left: 4px; }
.sel-wide span { margin-left: 6px; }
.sc { position: absolute; right: 6px; top: 15px; }
.r-rule { align-items: flex-start; margin-top: 7px; }
.r-rule label { margin-top: 9px; width: 143px; }
.rules { display: flex; flex-direction: column; width: 190px; color: #3c3c3c; letter-spacing: 0; }
.rule { display: flex; align-items: center; height: 24px; }
.r-file { padding-left: 33px; margin-top: 2px; }
.r-file span { margin-left: 12px; }
.r-lib { margin-top: 6px; padding-left: 5px; }
.chev { margin-right: 14px; }
.r-lib span { margin-left: 9px; }
.r-item { height: 26px; padding-left: 39px; }
.rule-sel, .rule-plain { margin-left: 11px; width: 133px; height: 26px; line-height: 26px; padding-left: 4px; white-space: nowrap; font-weight: 700; letter-spacing: .7px; }
.rule-sel { background: #6699cc; color: #eaf2fb; }
.rule-plain { color: #111; line-height: 24px; }
.r-lib + .r-item { margin-top: 2px; }
.fl-foot { height: 55px; flex: none; border-top: 1px solid #cfcfcf; display: flex; align-items: center; padding: 3px 16px 0 11px; gap: 14px; }
.info { margin-right: auto; }
.btn { width: 91px; height: 28px; background: #e8e8e8; border: 2px solid #c8c8c8; font: 17px Roboto, sans-serif; color: #777; letter-spacing: .3px; padding: 0; }

/* timeline */
.timeline { flex: 1; background: #f0f0f0; border-top: 2px solid #d8d8d8; position: relative; display: flex; align-items: flex-end; }
.tl-ctrl { display: flex; align-items: center; gap: 18px; padding: 0 0 3px 16px; }
.tl-track { margin-left: 34px; display: flex; align-items: flex-end; }
.tl-sketch { margin-bottom: 5px; }
.tl-mark { margin-left: -3px; }
.tl-gear { margin-left: auto; margin-right: 18px; margin-bottom: 3px; }

/* taskbar */
.taskbar { height: 46px; flex: none; background: linear-gradient(90deg, #262a28, #2d302d 50%, #28302a); display: flex; align-items: center; color: #fff; filter: blur(.35px); }
.tk-cell { width: 54px; height: 46px; display: flex; align-items: center; justify-content: center; }
.tk-sep { margin: 0 20px 0 10px; width: 2px; height: 30px; background: #4a4d4a; }
.tk-app { width: 240px; height: 46px; display: flex; align-items: center; font-size: 17.800px; color: #fff; padding-top: 3px; }
.tk-app svg { margin-top: -3px; }
.chrome { background: #a9672d; border-bottom: 3px solid #f57c00; padding-left: 11px; gap: 6px; }
.fusion { background: #5a5a5a; border-bottom: 3px solid #f9b9a9; padding-left: 11px; gap: 6px; margin-left: 2px; }
.tk-pin { width: 57px; height: 46px; display: flex; align-items: center; justify-content: center; flex: none; }
.tray { margin-left: auto; display: flex; align-items: center; height: 46px; padding-right: 21px; }
.tr-help { width: 36px; display: flex; justify-content: center; }
.tr-q { font: 700 17px "Liberation Sans", sans-serif; fill: #fff; text-anchor: middle; }
.tr-up { width: 36px; margin-right: 6px; display: flex; justify-content: center; }
.tr { width: 48px; display: flex; justify-content: center; }
.tr-time { width: 98px; text-align: center; font-size: 17.500px; color: #f0f0f0; padding-top: 1px; }
.tr-note { width: 58px; display: flex; justify-content: center; }
```
